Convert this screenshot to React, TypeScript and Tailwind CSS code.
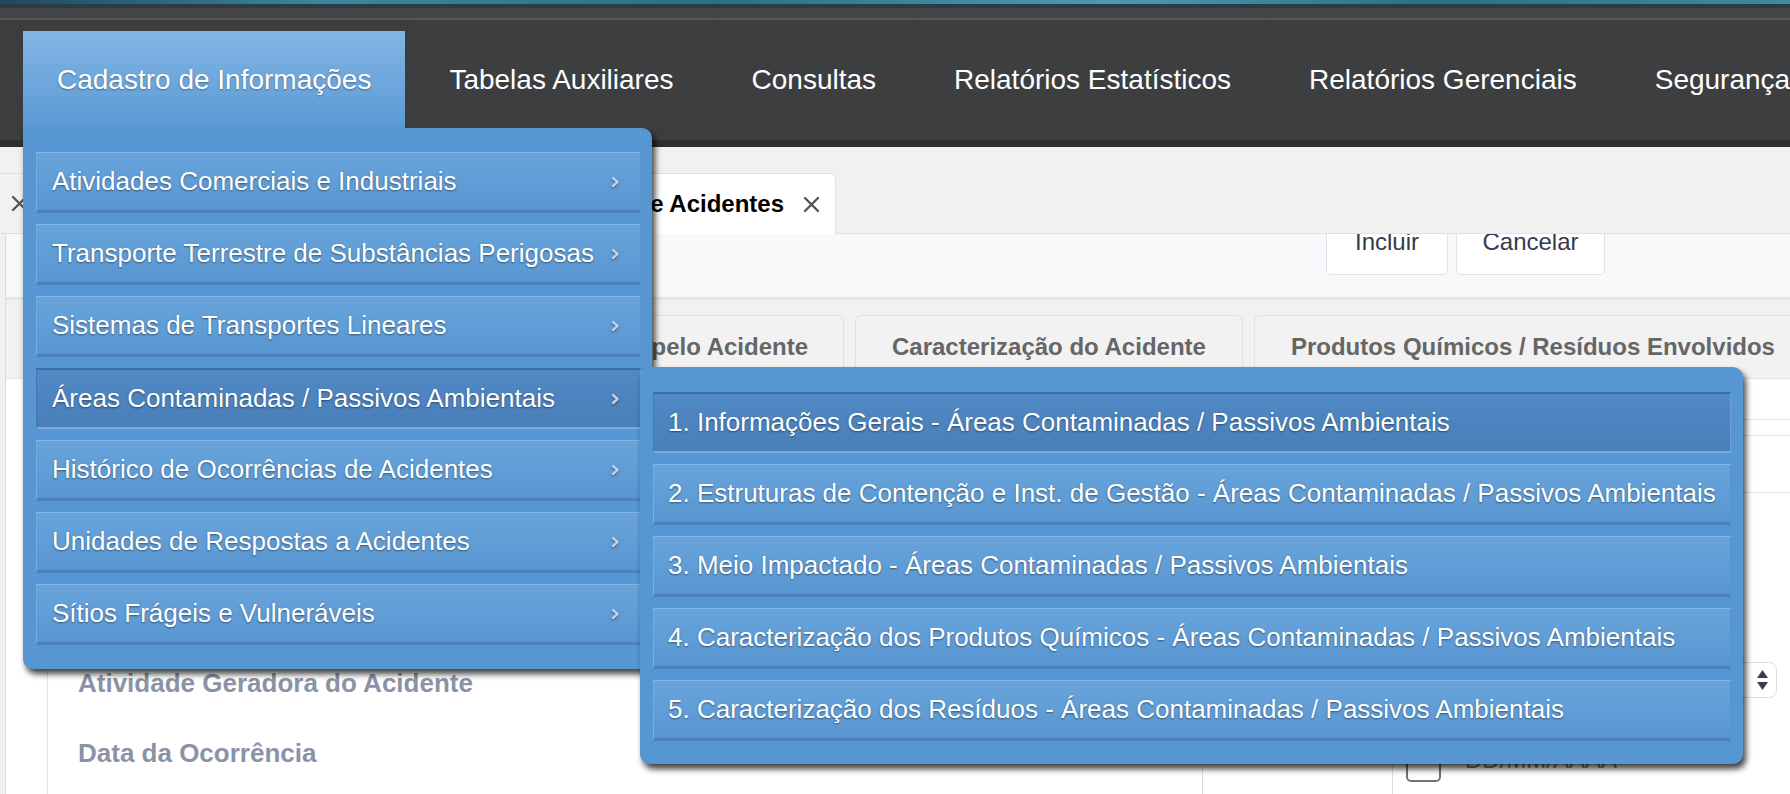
const navItems = ["Tabelas Auxiliares", "Consultas", "Relatórios Estatísticos", "Relatórios Gerenciais", "Segurança"];

const mainMenu = [
  "Atividades Comerciais e Industriais",
  "Transporte Terrestre de Substâncias Perigosas",
  "Sistemas de Transportes Lineares",
  "Áreas Contaminadas / Passivos Ambientais",
  "Histórico de Ocorrências de Acidentes",
  "Unidades de Respostas a Acidentes",
  "Sítios Frágeis e Vulneráveis",
];

const subMenu = [
  "1. Informações Gerais - Áreas Contaminadas / Passivos Ambientais",
  "2. Estruturas de Contenção e Inst. de Gestão - Áreas Contaminadas / Passivos Ambientais",
  "3. Meio Impactado - Áreas Contaminadas / Passivos Ambientais",
  "4. Caracterização dos Produtos Químicos - Áreas Contaminadas / Passivos Ambientais",
  "5. Caracterização dos Resíduos - Áreas Contaminadas / Passivos Ambientais",
];

const itemBase =
  "h-[61px] flex items-center text-[26px] text-white [text-shadow:0_1px_2px_rgba(0,0,0,0.45)] whitespace-nowrap";
const itemNormal =
  "bg-linear-to-b from-[#68a4db] to-[#5996d1] border-t border-l border-r border-b-[3px] border-t-[#82b7e5] border-l-[#76aee1] border-r-[#5b94cd] border-b-[#4a82bd]";
const itemActive =
  "bg-linear-to-b from-[#5089c5] to-[#4a7fb9] border-t-[2px] border-l border-r border-b-[2px] border-t-[#3e6d9f] border-l-[#4676ab] border-r-[#6aa2d9] border-b-[#76ade0]";

function Chevron() {
  return (
    <svg width="9" height="12" viewBox="0 0 9 12" className="drop-shadow-[0_1px_1px_rgba(0,0,0,0.45)]">
      <path d="M2 2 L6.5 6 L2 10" fill="none" stroke="#c2d0df" strokeWidth="2.4" strokeLinecap="round" strokeLinejoin="round" />
    </svg>
  );
}

function CloseIcon() {
  return (
    <svg width="17" height="17" viewBox="0 0 17 17">
      <path d="M2 2 L15 15 M15 2 L2 15" stroke="#555" strokeWidth="2.4" strokeLinecap="round" />
    </svg>
  );
}

function SubMenu() {
  return (
    <div className="absolute left-full top-[-3px] z-40 w-[1103px] rounded-[10px] bg-[#5596d3] pt-[25px] pl-[13px] pr-[12px] pb-[23px] flex flex-col gap-[11px] shadow-[3px_5px_6px_rgba(0,0,0,0.75)]">
      {subMenu.map((s, i) => (
        <div key={s} className={`${itemBase} ${i === 0 ? itemActive : itemNormal} pl-[14px]`}>
          {s}
        </div>
      ))}
    </div>
  );
}

function MainMenu() {
  return (
    <div className="absolute left-0 top-full z-30 w-[629px] rounded-b-[10px] rounded-tr-[10px] bg-[#5596d3] pt-[24px] pl-[13px] pr-[11px] pb-[24px] flex flex-col gap-[11px] shadow-[3px_5px_6px_rgba(0,0,0,0.75)]">
      {mainMenu.map((m, i) => (
        <div key={m} className={`${itemBase} ${i === 3 ? itemActive : itemNormal} relative justify-between pl-[15px] pr-[20px]`}>
          <span>{m}</span>
          <Chevron />
          {i === 3 && <SubMenu />}
        </div>
      ))}
    </div>
  );
}

export default function App() {
  return (
    <div className="w-[1790px] h-[794px] overflow-hidden bg-[#f1f1f1] font-['Liberation_Sans',Arial,sans-serif]">
      <header className="relative z-20 bg-[#3c3d3f]">
        <div className="h-[4px] bg-[linear-gradient(90deg,#1d4a5c_0%,#3a86a0_18%,#2a6f88_40%,#4a9ab5_62%,#2b6f88_80%,#3d8aa4_100%)]" />
        <div className="h-[4px] bg-[#2f3b44]" />
        <div className="h-[10px] bg-[#434446]" />
        <div className="h-[2px] bg-[#58595b]" />
        <nav className="h-[120px] flex items-start gap-[10px] pl-[23px] text-[28px] text-white whitespace-nowrap">
          <div className="relative shrink-0 mt-[11px] h-[97px] px-[34px] flex items-center bg-linear-to-b from-[#82b5e3] to-[#5b9ad6] [text-shadow:0_1px_2px_rgba(0,0,0,0.35)]">
            Cadastro de Informações
            <MainMenu />
          </div>
          {navItems.map((n) => (
            <div key={n} className="shrink-0 h-[107px] pt-[13px] px-[34px] flex items-center bg-[#3d3e40]">
              {n}
            </div>
          ))}
        </nav>
        <div className="h-[7px] bg-[#2e2f30]" />
      </header>

      <main className="relative z-0">
        {/* open document tabs */}
        <div className="h-[87px] pt-[26px] flex">
          <div className="shrink-0 flex items-center pl-[11px] pr-[15px] border-t border-r border-b border-[#dedede] rounded-tr-[6px]">
            <CloseIcon />
          </div>
          <div className="shrink-0 w-[4px] border-b border-[#dedede]" />
          <div className="shrink-0 w-[788px] flex items-center justify-end gap-[19px] pr-[15px] bg-white border-t border-l border-r border-[#e1e1e1] rounded-t-[6px] text-[24px] font-bold text-black whitespace-nowrap">
            <span>Histórico de Ocorrências de Acidentes</span>
            <CloseIcon />
          </div>
          <div className="flex-1 border-b border-[#e2e2e2]" />
        </div>

        <div className="ml-[5px] border-l border-[#dcdcdc]">
          <div className="h-[66px] bg-[#f8f9fb] border-b-[3px] border-b-[#e4e6e9] overflow-hidden flex justify-end gap-[8px] pr-[185px] text-[24px] text-[#343b4b]">
            <div className="shrink-0 mt-[-26px] h-[67px] w-[122px] flex items-center justify-center bg-white border border-[#dfe2e6] rounded-b-[5px]">
              Incluir
            </div>
            <div className="shrink-0 mt-[-26px] h-[67px] w-[149px] flex items-center justify-center bg-white border border-[#dfe2e6] rounded-b-[5px]">
              Cancelar
            </div>
          </div>

          {/* section tabs */}
          <div className="h-[78px] pt-[15px] flex gap-[11px] text-[24px] font-bold text-[#666] whitespace-nowrap">
            <div className="shrink-0 ml-[42px] w-[796px] flex items-center justify-end pr-[35px] bg-[#f2f2f2] border-t border-l border-r border-[#e1e1e1] rounded-t-[6px]">
              Atividades Afetadas pelo Acidente
            </div>
            <div className="shrink-0 px-[36px] flex items-center bg-[#f2f2f2] border-t border-l border-r border-[#e1e1e1] rounded-t-[6px]">
              Caracterização do Acidente
            </div>
            <div className="shrink-0 px-[36px] flex items-center bg-[#f2f2f2] border-t border-l border-r border-[#e1e1e1] rounded-t-[6px]">
              Produtos Químicos / Resíduos Envolvidos
            </div>
          </div>

          {/* form */}
          <div className="h-[420px] bg-white border-t border-[#e2e2e2]">
            <div className="ml-[41px] h-full border-l border-[#e1e1e1] pl-[30px] text-[26px] font-bold text-[#8a93a5] whitespace-nowrap">
              <div className="flex h-[41px]">
                <div className="shrink-0 w-[1124px]" />
                <div className="shrink-0 w-[640px] border border-t-0 border-[#e3e5e8] rounded-bl-[6px]" />
              </div>
              <div className="flex h-[58px] mt-[15px]">
                <div className="shrink-0 w-[1124px]" />
                <div className="shrink-0 w-[640px] border border-[#e3e5e8] rounded-l-[6px]" />
              </div>
              <div className="flex items-start h-[36px] mt-[169px]">
                <div className="shrink-0 w-[1124px] mt-[6px] leading-[30px]">Atividade Geradora do Acidente</div>
                <div className="shrink-0 w-[575px] h-[36px] flex items-center justify-end pr-[7px] border border-[#d9dde3] rounded-[8px] bg-white">
                  <svg width="13" height="22" viewBox="0 0 13 22">
                    <path d="M6.5 1 L12 9 L1 9 Z M1 13 L12 13 L6.5 21 Z" fill="#3a3f47" />
                  </svg>
                </div>
              </div>
              <div className="flex items-start h-[60px] mt-[40px]">
                <div className="shrink-0 w-[1124px] leading-[30px]">Data da Ocorrência</div>
                <div className="shrink-0 mt-[19px] w-[191px] h-[48px] border border-[#d9dde3] rounded-[6px]" />
                <div className="shrink-0 ml-[13px] mt-[14px] w-[35px] h-[30px] border-2 border-[#6b7280] rounded-[5px]" />
                <div className="shrink-0 ml-[24px] mt-[7px] leading-[30px] text-[24px] font-normal text-[#7d828a]">DD/MM/AAAA</div>
              </div>
            </div>
          </div>
        </div>
      </main>
    </div>
  );
}
